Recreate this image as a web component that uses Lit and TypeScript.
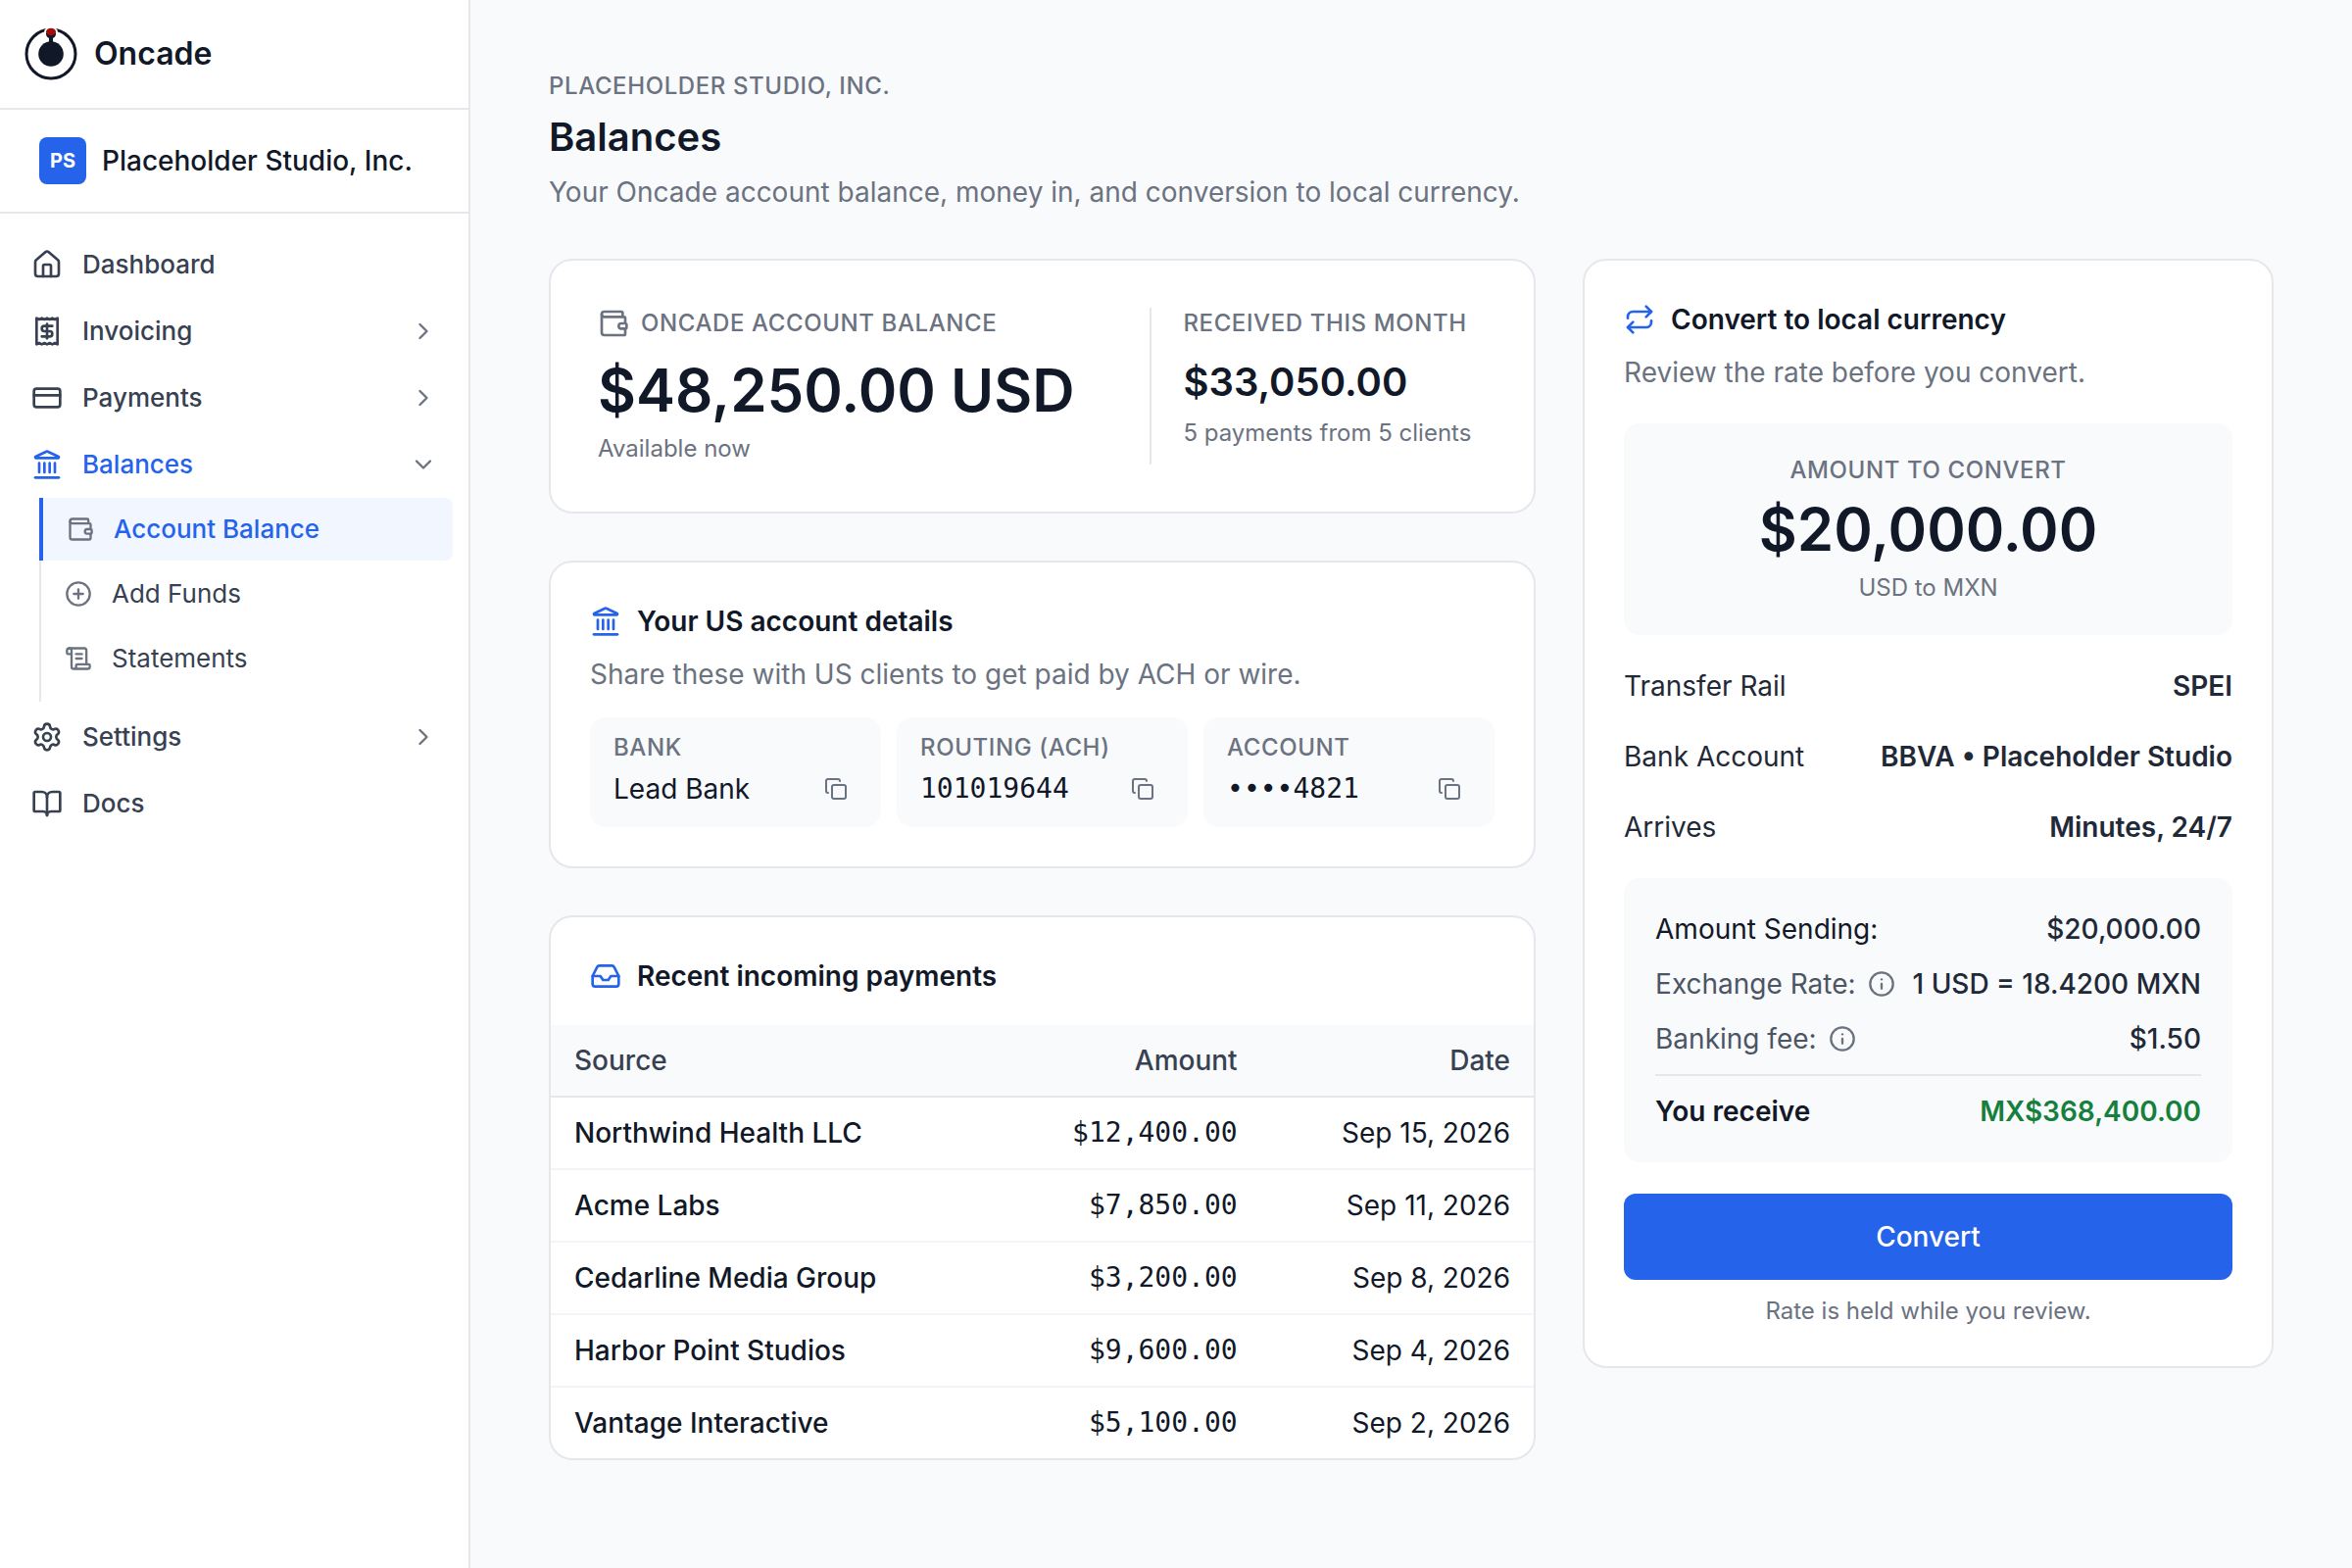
import { LitElement, html, css, svg, nothing } from "lit";
import { customElement, property } from "lit/decorators.js";
import { classMap } from "lit/directives/class-map.js";

const ICONS = {
  house: svg`<path d="M15 21v-8a1 1 0 0 0-1-1h-4a1 1 0 0 0-1 1v8"/><path d="M3 10a2 2 0 0 1 .709-1.528l7-5.999a2 2 0 0 1 2.582 0l7 5.999A2 2 0 0 1 21 10v9a2 2 0 0 1-2 2H5a2 2 0 0 1-2-2z"/>`,
  receipt: svg`<path d="M4 2v20l2-1 2 1 2-1 2 1 2-1 2 1 2-1 2 1V2l-2 1-2-1-2 1-2-1-2 1-2-1-2 1Z"/><path d="M16 8h-6a2 2 0 1 0 0 4h4a2 2 0 1 1 0 4H8"/><path d="M12 17.5v-11"/>`,
  card: svg`<rect width="20" height="14" x="2" y="5" rx="2"/><path d="M2 10h20"/>`,
  landmark: svg`<path d="M10 18v-7"/><path d="M11.12 2.198a2 2 0 0 1 1.76.006l7.866 3.847c.476.233.31.949-.22.949H3.474c-.53 0-.695-.716-.22-.949z"/><path d="M14 18v-7"/><path d="M18 18v-7"/><path d="M3 22h18"/><path d="M6 18v-7"/>`,
  wallet: svg`<path d="M19 7V4a1 1 0 0 0-1-1H5a2 2 0 0 0 0 4h15a1 1 0 0 1 1 1v4h-3a2 2 0 0 0 0 4h3a1 1 0 0 0 1-1v-2a1 1 0 0 0-1-1"/><path d="M3 5v14a2 2 0 0 0 2 2h15a1 1 0 0 0 1-1v-4"/>`,
  plus: svg`<circle cx="12" cy="12" r="10"/><path d="M8 12h8"/><path d="M12 8v8"/>`,
  scroll: svg`<path d="M15 12h-5"/><path d="M15 8h-5"/><path d="M19 17V5a2 2 0 0 0-2-2H4"/><path d="M8 21h12a2 2 0 0 0 2-2v-1a1 1 0 0 0-1-1H11a1 1 0 0 0-1 1v1a2 2 0 1 1-4 0V5a2 2 0 1 0-4 0v2a1 1 0 0 0 1 1h3"/>`,
  gear: svg`<path d="M9.671 4.136a2.34 2.34 0 0 1 4.659 0 2.34 2.34 0 0 0 3.319 1.915 2.34 2.34 0 0 1 2.33 4.033 2.34 2.34 0 0 0 0 3.831 2.34 2.34 0 0 1-2.33 4.033 2.34 2.34 0 0 0-3.319 1.915 2.34 2.34 0 0 1-4.659 0 2.34 2.34 0 0 0-3.32-1.915 2.34 2.34 0 0 1-2.33-4.033 2.34 2.34 0 0 0 0-3.831A2.34 2.34 0 0 1 6.35 6.051a2.34 2.34 0 0 0 3.319-1.915"/><circle cx="12" cy="12" r="3"/>`,
  book: svg`<path d="M12 7v14"/><path d="M3 18a1 1 0 0 1-1-1V4a1 1 0 0 1 1-1h5a4 4 0 0 1 4 4 4 4 0 0 1 4-4h5a1 1 0 0 1 1 1v13a1 1 0 0 1-1 1h-6a3 3 0 0 0-3 3 3 3 0 0 0-3-3z"/>`,
  right: svg`<path d="m9 18 6-6-6-6"/>`,
  down: svg`<path d="m6 9 6 6 6-6"/>`,
  inbox: svg`<path d="M22 12h-6l-2 3h-4l-2-3H2"/><path d="M5.45 5.11 2 12v6a2 2 0 0 0 2 2h16a2 2 0 0 0 2-2v-6l-3.45-6.89A2 2 0 0 0 16.76 4H7.24a2 2 0 0 0-1.79 1.11z"/>`,
  repeat: svg`<path d="m17 2 4 4-4 4"/><path d="M3 11v-1a4 4 0 0 1 4-4h14"/><path d="m7 22-4-4 4-4"/><path d="M21 13v1a4 4 0 0 1-4 4H3"/>`,
  copy: svg`<rect width="14" height="14" x="8" y="8" rx="2"/><path d="M4 16c-1.1 0-2-.9-2-2V4c0-1.1.9-2 2-2h10c1.1 0 2 .9 2 2"/>`,
  info: svg`<circle cx="12" cy="12" r="10"/><path d="M12 16v-4"/><path d="M12 8h.01"/>`,
};

type IconName = keyof typeof ICONS;

const icon = (name: IconName, size: number) => html`
  <svg class="icon" width=${size} height=${size} viewBox="0 0 24 24" aria-hidden="true">${ICONS[name]}</svg>
`;

const shared = css`
  * {
    box-sizing: border-box;
  }
  h1,
  h2,
  p,
  dl,
  dd,
  ul {
    margin: 0;
    padding: 0;
  }
  ul {
    list-style: none;
  }
  a {
    color: inherit;
    text-decoration: none;
  }
  button {
    margin: 0;
    padding: 0;
    border: 0;
    background: none;
    font: inherit;
    color: inherit;
    text-align: inherit;
    cursor: pointer;
  }
  .icon {
    display: block;
    flex: none;
    fill: none;
    stroke: currentColor;
    stroke-width: 2;
    stroke-linecap: round;
    stroke-linejoin: round;
  }
`;

interface NavItem {
  label: string;
  icon: IconName;
  group?: boolean;
  active?: boolean;
  children?: NavItem[];
}

const NAV: NavItem[] = [
  { label: "Dashboard", icon: "house" },
  { label: "Invoicing", icon: "receipt", group: true },
  { label: "Payments", icon: "card", group: true },
  {
    label: "Balances",
    icon: "landmark",
    group: true,
    active: true,
    children: [
      { label: "Account Balance", icon: "wallet", active: true },
      { label: "Add Funds", icon: "plus" },
      { label: "Statements", icon: "scroll" },
    ],
  },
  { label: "Settings", icon: "gear", group: true },
  { label: "Docs", icon: "book" },
];

@customElement("side-nav")
export class SideNav extends LitElement {
  static styles = [
    shared,
    css`
      :host {
        display: block;
        background: #fff;
        border-right: 2px solid #e5e7eb;
        color: #111827;
      }
      .brand {
        display: flex;
        align-items: center;
        gap: 16px;
        padding: 27px 24px;
        border-bottom: 2px solid #e5e7eb;
        font-size: 32px;
        font-weight: 600;
        line-height: 40px;
      }
      .logo {
        display: block;
        flex: none;
      }
      .org {
        display: flex;
        align-items: center;
        gap: 16px;
        padding: 28px 40px;
        border-bottom: 2px solid #e5e7eb;
        font-size: 28px;
        font-weight: 500;
        line-height: 40px;
        white-space: nowrap;
      }
      .avatar {
        display: grid;
        place-items: center;
        width: 48px;
        height: 48px;
        border-radius: 8px;
        background: #2563eb;
        color: #fff;
        font-size: 20px;
        font-weight: 700;
      }
      .menu {
        padding: 18px 16px;
      }
      .item {
        display: flex;
        align-items: center;
        gap: 20px;
        width: 100%;
        padding: 16px;
        color: #374151;
        font-size: 26px;
        font-weight: 500;
        line-height: 36px;
      }
      .item.active {
        color: #2563eb;
      }
      .text {
        flex: 1;
      }
      .chevron {
        color: #6b7280;
      }
      .sub {
        display: flex;
        flex-direction: column;
        gap: 2px;
        margin: 0 0 2px 24px;
        padding-bottom: 12px;
        border-left: 2px solid #e5e7eb;
      }
      .subitem {
        display: flex;
        align-items: center;
        gap: 20px;
        padding: 14px 24px;
        color: #374151;
        font-size: 26px;
        line-height: 36px;
      }
      .subitem .glyph {
        color: #6b7280;
      }
      .subitem.active {
        margin-left: -2px;
        border-left: 4px solid #2563eb;
        border-radius: 0 8px 8px 0;
        background: #f1f6ff;
        color: #2563eb;
        font-weight: 500;
      }
    `,
  ];

  private renderItem(item: NavItem) {
    const classes = classMap({ item: true, active: !!item.active });
    const body = html`
      ${icon(item.icon, 32)}
      <span class="text">${item.label}</span>
      ${item.group ? html`<span class="chevron">${icon(item.children ? "down" : "right", 28)}</span>` : nothing}
    `;
    return html`
      <li>
        ${item.group
          ? html`<button type="button" class=${classes} aria-expanded=${item.children ? "true" : "false"}>${body}</button>`
          : html`<a href="#" class=${classes}>${body}</a>`}
        ${item.children
          ? html`<ul class="sub">
              ${item.children.map(
                (child) => html`<li>
                  <a
                    href="#"
                    class=${classMap({ subitem: true, active: !!child.active })}
                    aria-current=${child.active ? "page" : nothing}
                  >
                    <span class="glyph">${icon(child.icon, 28)}</span>${child.label}
                  </a>
                </li>`
              )}
            </ul>`
          : nothing}
      </li>
    `;
  }

  render() {
    return html`
      <header class="brand">
        <svg class="logo" width="56" height="56" viewBox="0 0 56 56" aria-hidden="true">
          <circle cx="28" cy="28" r="25" fill="none" stroke="#111827" stroke-width="3" />
          <ellipse cx="28" cy="6" rx="7" ry="6" fill="#fff" />
          <rect x="26" y="9" width="4" height="9" fill="#111827" />
          <circle cx="28" cy="7.5" r="5" fill="#111827" />
          <ellipse cx="28" cy="5.4" rx="5" ry="3.7" fill="#a50d0d" />
          <circle cx="28" cy="28" r="12.8" fill="#111827" />
        </svg>
        Oncade
      </header>
      <div class="org"><span class="avatar">PS</span>Placeholder Studio, Inc.</div>
      <nav aria-label="Main">
        <ul class="menu">
          ${NAV.map((item) => this.renderItem(item))}
        </ul>
      </nav>
    `;
  }
}

const cardStyles = css`
  :host {
    display: block;
    background: #fff;
    border: 2px solid #e5e7eb;
    border-radius: 24px;
    color: #111827;
    font-size: 28px;
    line-height: 40px;
  }
  .title {
    display: flex;
    align-items: center;
    gap: 16px;
    font-size: 28px;
    font-weight: 600;
    line-height: 40px;
  }
  .title .icon {
    color: #2563eb;
  }
  .lead {
    margin-top: 14px;
    color: #6b7280;
  }
  .label {
    display: flex;
    align-items: center;
    gap: 12px;
    color: #6b7280;
    font-size: 24px;
    font-weight: 500;
    letter-spacing: 0.025em;
    line-height: 32px;
    text-transform: uppercase;
  }
  .note {
    color: #6b7280;
    font-size: 24px;
    line-height: 32px;
  }
  .figure {
    font-size: 60px;
    font-weight: 600;
    line-height: 72px;
  }
  .mono {
    font-family: Menlo, "DejaVu Sans Mono", monospace;
  }
`;

@customElement("balance-card")
export class BalanceCard extends LitElement {
  static styles = [
    shared,
    cardStyles,
    css`
      .split {
        display: grid;
        grid-template-columns: 3fr 2fr;
        gap: 48px;
        padding: 48px;
      }
      .figure {
        margin: 16px 0 8px;
        white-space: nowrap;
      }
      .received {
        padding-left: 32px;
        border-left: 2px solid #e5e7eb;
      }
      .amount {
        margin: 20px 0 12px;
        font-size: 40px;
        font-weight: 600;
        line-height: 48px;
      }
    `,
  ];

  render() {
    return html`
      <div class="split">
        <div>
          <p class="label">${icon("wallet", 32)}Oncade account balance</p>
          <p class="figure">$48,250.00 USD</p>
          <p class="note">Available now</p>
        </div>
        <div class="received">
          <p class="label">Received this month</p>
          <p class="amount">$33,050.00</p>
          <p class="note">5 payments from 5 clients</p>
        </div>
      </div>
    `;
  }
}

const DETAILS = [
  { label: "Bank", value: "Lead Bank", mono: false },
  { label: "Routing (ACH)", value: "101019644", mono: true },
  { label: "Account", value: "••••4821", mono: true },
];

@customElement("account-details")
export class AccountDetails extends LitElement {
  static styles = [
    shared,
    cardStyles,
    css`
      .body {
        padding: 40px;
      }
      .tiles {
        display: grid;
        grid-template-columns: repeat(3, minmax(0, 1fr));
        gap: 16px;
        margin-top: 24px;
      }
      .tile {
        padding: 15px 24px 19px;
        border-radius: 16px;
        background: #f9fafc;
      }
      .value {
        display: flex;
        align-items: center;
        justify-content: space-between;
        margin-top: 6px;
      }
      .copy {
        padding: 8px 10px;
        color: #6b7280;
      }
    `,
  ];

  render() {
    return html`
      <div class="body">
        <h2 class="title">${icon("landmark", 32)}Your US account details</h2>
        <p class="lead">Share these with US clients to get paid by ACH or wire.</p>
        <dl class="tiles">
          ${DETAILS.map(
            (d) => html`<div class="tile">
              <dt class="label">${d.label}</dt>
              <dd class="value">
                <span class=${classMap({ mono: d.mono })}>${d.value}</span>
                <button type="button" class="copy" aria-label="Copy ${d.label}">${icon("copy", 24)}</button>
              </dd>
            </div>`
          )}
        </dl>
      </div>
    `;
  }
}

const PAYMENTS = [
  ["Northwind Health LLC", "$12,400.00", "Sep 15, 2026"],
  ["Acme Labs", "$7,850.00", "Sep 11, 2026"],
  ["Cedarline Media Group", "$3,200.00", "Sep 8, 2026"],
  ["Harbor Point Studios", "$9,600.00", "Sep 4, 2026"],
  ["Vantage Interactive", "$5,100.00", "Sep 2, 2026"],
];

@customElement("recent-payments")
export class RecentPayments extends LitElement {
  static styles = [
    shared,
    cardStyles,
    css`
      :host {
        overflow: hidden;
      }
      .title {
        padding: 40px 40px 30px;
      }
      .table {
        width: 100%;
        border-collapse: separate;
        border-spacing: 0;
        white-space: nowrap;
      }
      .cell {
        padding: 16px 24px;
        border-bottom: 2px solid #f3f4f6;
        text-align: right;
        font-weight: 400;
      }
      .cell:first-child {
        text-align: left;
        font-weight: 500;
      }
      .row:last-child .cell {
        border-bottom: 0;
      }
      .head .cell {
        border-bottom: 2px solid #e5e7eb;
        background: #f9fafc;
        color: #374151;
        font-weight: 500;
      }
    `,
  ];

  render() {
    return html`
      <h2 class="title" id="payments">${icon("inbox", 32)}Recent incoming payments</h2>
      <table class="table" aria-labelledby="payments">
        <thead class="head">
          <tr>
            <th class="cell" scope="col">Source</th>
            <th class="cell" scope="col">Amount</th>
            <th class="cell" scope="col">Date</th>
          </tr>
        </thead>
        <tbody>
          ${PAYMENTS.map(
            ([source, amount, date]) => html`<tr class="row">
              <td class="cell">${source}</td>
              <td class="cell mono">${amount}</td>
              <td class="cell">${date}</td>
            </tr>`
          )}
        </tbody>
      </table>
    `;
  }
}

const TRANSFER = [
  ["Transfer Rail", "SPEI"],
  ["Bank Account", "BBVA • Placeholder Studio"],
  ["Arrives", "Minutes, 24/7"],
];

const QUOTE = [
  { label: "Amount Sending:", value: "$20,000.00", info: false },
  { label: "Exchange Rate:", value: "1 USD = 18.4200 MXN", info: true },
  { label: "Banking fee:", value: "$1.50", info: true },
];

@customElement("convert-card")
export class ConvertCard extends LitElement {
  @property() target = "MXN";

  static styles = [
    shared,
    cardStyles,
    css`
      .body {
        padding: 40px;
      }
      .panel {
        padding: 32px;
        border-radius: 16px;
        background: #f9fafc;
      }
      .sum {
        margin-top: 32px;
        text-align: center;
      }
      .sum .label {
        justify-content: center;
      }
      .sum .figure {
        margin: 8px 0;
      }
      .transfer {
        padding: 16px 0;
        color: #1f2937;
      }
      .line {
        display: flex;
        align-items: center;
        justify-content: space-between;
        gap: 16px;
        white-space: nowrap;
      }
      .transfer .line {
        padding: 16px 0;
      }
      .transfer .value {
        font-weight: 600;
      }
      .quote {
        display: flex;
        flex-direction: column;
        gap: 16px;
      }
      .quote .value {
        color: #1f2937;
        font-weight: 500;
      }
      .name {
        display: flex;
        align-items: center;
        gap: 12px;
      }
      .name.muted {
        color: #4b5563;
      }
      .info {
        color: #6b7280;
      }
      .quote .total {
        padding-top: 16px;
        border-top: 2px solid #e5e7eb;
        font-weight: 600;
      }
      .quote .total .value {
        color: #15803d;
        font-weight: 600;
      }
      .submit {
        display: block;
        width: 100%;
        margin: 32px 0 16px;
        padding: 24px;
        border-radius: 12px;
        background: #2563eb;
        color: #fff;
        font-weight: 500;
        text-align: center;
      }
      .foot {
        text-align: center;
      }
    `,
  ];

  render() {
    return html`
      <div class="body">
        <h2 class="title">${icon("repeat", 32)}Convert to local currency</h2>
        <p class="lead">Review the rate before you convert.</p>
        <div class="panel sum">
          <p class="label">Amount to convert</p>
          <p class="figure">$20,000.00</p>
          <p class="note">USD to ${this.target}</p>
        </div>
        <dl class="transfer">
          ${TRANSFER.map(
            ([name, value]) => html`<div class="line">
              <dt>${name}</dt>
              <dd class="value">${value}</dd>
            </div>`
          )}
        </dl>
        <dl class="panel quote">
          ${QUOTE.map(
            (q) => html`<div class="line">
              <dt class=${classMap({ name: true, muted: q.info })}>
                ${q.label}
                ${q.info
                  ? html`<button type="button" class="info" aria-label="About ${q.label}">${icon("info", 28)}</button>`
                  : nothing}
              </dt>
              <dd class="value">${q.value}</dd>
            </div>`
          )}
          <div class="line total">
            <dt>You receive</dt>
            <dd class="value">MX$368,400.00</dd>
          </div>
        </dl>
        <button type="button" class="submit">Convert</button>
        <p class="note foot">Rate is held while you review.</p>
      </div>
    `;
  }
}

@customElement("app-root")
export class AppRoot extends LitElement {
  static styles = [
    shared,
    css`
      :host {
        display: grid;
        grid-template-columns: 480px minmax(0, 1fr);
        min-height: 100vh;
        background: #f9fafc;
        color: #111827;
        font-family: Inter, "Liberation Sans", sans-serif;
        font-size: 28px;
        line-height: 40px;
      }
      .main {
        padding: 72px 80px;
      }
      .eyebrow {
        color: #6b7280;
        font-size: 24px;
        font-weight: 500;
        letter-spacing: 0.025em;
        line-height: 32px;
        text-transform: uppercase;
      }
      .heading {
        margin: 12px 0;
        font-size: 40px;
        font-weight: 600;
        line-height: 48px;
      }
      .intro {
        color: #6b7280;
      }
      .columns {
        display: grid;
        grid-template-columns: minmax(0, 10fr) minmax(0, 7fr);
        align-items: start;
        gap: 48px;
        margin-top: 48px;
      }
      .stack {
        display: grid;
        gap: 48px;
      }
    `,
  ];

  render() {
    return html`
      <side-nav></side-nav>
      <main class="main">
        <p class="eyebrow">Placeholder Studio, Inc.</p>
        <h1 class="heading">Balances</h1>
        <p class="intro">Your Oncade account balance, money in, and conversion to local currency.</p>
        <div class="columns">
          <div class="stack">
            <balance-card></balance-card>
            <account-details></account-details>
            <recent-payments></recent-payments>
          </div>
          <convert-card></convert-card>
        </div>
      </main>
    `;
  }
}
